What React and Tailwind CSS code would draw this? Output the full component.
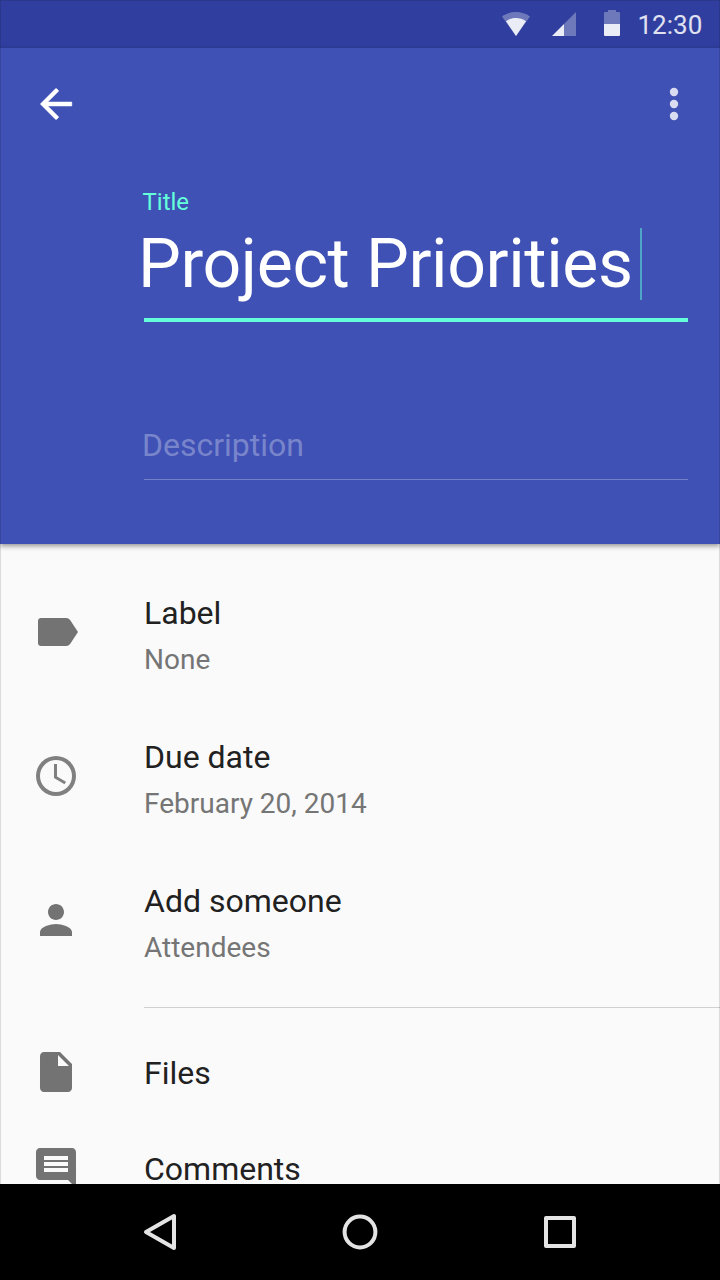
function StatusBar() {
  return (
    <div className="flex h-12 shrink-0 items-center bg-[#303f9f] pl-[500px]">
      <svg className="h-12 w-8" viewBox="0 0 32 48" fill="#fff">
        <path opacity=".3" d="M2 16.6C6 13.5 10.8 12 16 12s10 1.500 14 4.600L16 36z" />
        <path opacity=".86" d="M6 21.300C9 19 12.500 18 16 18s7 1 10 3.300L16 36z" />
      </svg>
      <svg className="ml-5 h-12 w-6" viewBox="0 0 24 48" fill="#fff">
        <path opacity=".3" d="M12 24L24 12V36H12z" />
        <path opacity=".9" d="M0 36L12 24V36z" />
      </svg>
      <svg className="ml-7 h-12 w-4" viewBox="0 0 16 48" fill="#fff">
        <path opacity=".3" d="M4 10h8v2h3a1 1 0 0 1 1 1v11H0V13a1 1 0 0 1 1-1h3z" />
        <path opacity=".9" d="M0 24h16v11a1 1 0 0 1-1 1H1a1 1 0 0 1-1-1z" />
      </svg>
      <span className="ml-[17.500px] pt-px text-[26px] leading-[48px] text-white/85">12:30</span>
    </div>
  );
}

function Header() {
  return (
    <header className="relative h-[496px] shrink-0 bg-[#3f51b5] shadow-[0_2px_5px_rgba(0,0,0,0.42)]">
      <div className="flex h-28 items-center justify-between px-8">
        <svg className="size-12" viewBox="0 0 24 24" fill="#fff" stroke="#fff" strokeWidth=".25" strokeLinejoin="round">
          <path d="M19.900 11H7.900l5.240-5.240a.4.400 0 0 0 0-.6l-.8-.8a.4.400 0 0 0-.6 0L4.150 12l7.590 7.640a.4.400 0 0 0 .6 0l.8-.8a.4.400 0 0 0 0-.6L7.900 13H19.900z" />
        </svg>
        <svg className="-mr-[10px] size-12" viewBox="0 0 48 48" fill="#d9dcf0">
          <circle cx="24" cy="12" r="4.200" />
          <circle cx="24" cy="24" r="4.200" />
          <circle cx="24" cy="36" r="4.200" />
        </svg>
      </div>
      <div className="ml-36 mr-8 flex flex-col pt-[26px]">
        <label className="-ml-[1.500px] text-[24px] leading-8 text-[#64ffda]">Title</label>
        <div className="-ml-[6px] mt-[6px] flex h-20 items-start whitespace-nowrap text-[68px] leading-[80px] tracking-[-0.4px] text-white">
          <span>Project Priorities</span>
          <span className="ml-[7px] mt-1 h-[72px] w-[2px] bg-[#4fa5c6]" />
        </div>
        <div className="mt-[14px] h-1 bg-[#64ffda]" />
        <span className="-ml-[2px] mt-[103px] text-[32px] leading-10 text-[#7985cb]">Description</span>
        <div className="mt-[14px] h-px bg-[#7280ca]" />
      </div>
    </header>
  );
}

function Icon({ children, color = "#737373" }) {
  return (
    <svg className="ml-8 mr-16 size-12 shrink-0" viewBox="0 0 24 24" fill={color}>
      {children}
    </svg>
  );
}

function DetailRow({ icon, title, detail }) {
  return (
    <li className="flex h-36 shrink-0 items-center">
      {icon}
      <div className="flex flex-col gap-[9px] pt-[7px]">
        <span className="text-[32px] leading-10 text-[#212121]">{title}</span>
        <span className="text-[28px] leading-9 text-[#757575]">{detail}</span>
      </div>
    </li>
  );
}

function LinkRow({ icon, title }) {
  return (
    <li className="flex h-24 shrink-0 items-center">
      {icon}
      <span className="pt-[2px] text-[32px] leading-10 text-[#212121]">{title}</span>
    </li>
  );
}

function NavBar() {
  return (
    <nav className="relative flex h-24 shrink-0 items-center justify-between bg-black px-[136px]">
      <svg className="size-12" viewBox="0 0 48 48" fill="none" stroke="#e4e4e4" strokeWidth="4" strokeLinejoin="round">
        <path d="M10 24L38 8V40z" />
      </svg>
      <svg className="size-12" viewBox="0 0 48 48" fill="none" stroke="#e4e4e4" strokeWidth="4">
        <circle cx="24" cy="24" r="15.400" />
      </svg>
      <svg className="size-12" viewBox="0 0 48 48" fill="none" stroke="#e4e4e4" strokeWidth="4" strokeLinejoin="round">
        <path d="M10 10h28v28H10z" />
      </svg>
    </nav>
  );
}

export default function App() {
  return (
    <div className="relative flex h-[1280px] w-[720px] flex-col overflow-hidden bg-[#fafafa] font-['Roboto',sans-serif]">
      <StatusBar />
      <Header />
      <main className="flex min-h-0 flex-1 flex-col overflow-hidden pt-4">
        <ul className="flex flex-col">
          <DetailRow
            title="Label"
            detail="None"
            icon={
              <Icon>
                <path d="M4.500 5h12.600c.8 0 1.500.4 1.950 1L23 12l-3.950 6c-.45.6-1.150 1-1.950 1H4.500C3.600 19 3 18.400 3 17.500v-11C3 5.600 3.600 5 4.500 5z" />
              </Icon>
            }
          />
          <DetailRow
            title="Due date"
            detail="February 20, 2014"
            icon={
              <Icon color="#808080">
                <path d="M12 2a10 10 0 1 0 0 20 10 10 0 0 0 0-20zm0 18a8 8 0 1 1 0-16 8 8 0 0 1 0 16z" />
                <path d="M12.500 6H11v7l5.250 3.150.75-1.230-4.500-2.670z" />
              </Icon>
            }
          />
          <DetailRow
            title="Add someone"
            detail="Attendees"
            icon={
              <Icon>
                <path d="M12 12c2.210 0 4-1.790 4-4s-1.790-4-4-4-4 1.790-4 4 1.790 4 4 4zm0 2c-2.670 0-8 1.340-8 4v2h16v-2c0-2.660-5.330-4-8-4z" />
              </Icon>
            }
          />
        </ul>
        <div className="mb-4 ml-36 mt-[15px] h-px shrink-0 bg-[#d0d0d0]" />
        <ul className="flex flex-col">
          <LinkRow
            title="Files"
            icon={
              <Icon>
                <path d="M6 2c-1.100 0-1.990.9-1.990 2L4 20c0 1.100.89 2 1.990 2H18c1.100 0 2-.9 2-2V8l-6-6H6zm7 7V3.500L18.500 9H13z" />
              </Icon>
            }
          />
          <LinkRow
            title="Comments"
            icon={
              <Icon>
                <path d="M21.990 4c0-1.100-.89-2-1.990-2H4c-1.100 0-2 .9-2 2v12c0 1.100.9 2 2 2h14l4 4-.01-18zM18 14H6v-2h12v2zm0-3H6V9h12v2zm0-3H6V6h12v2z" />
              </Icon>
            }
          />
        </ul>
      </main>
      <NavBar />
      <div className="pointer-events-none absolute inset-0 border-x border-t border-black/12" />
    </div>
  );
}
